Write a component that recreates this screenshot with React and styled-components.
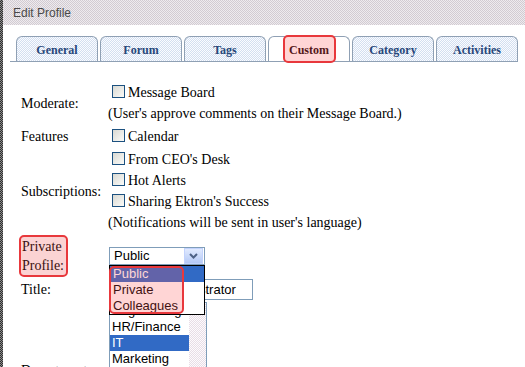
import React from 'react';
import styled, { createGlobalStyle } from 'styled-components';

const GlobalStyle = createGlobalStyle`
  html, body {
    margin: 0;
    padding: 0;
    background: #fff;
  }
  body {
    font-family: "Liberation Serif", "Times New Roman", serif;
    font-size: 14px;
    color: #000;
    overflow: hidden;
  }
`;

const dots = (a, b) => `repeating-conic-gradient(${a} 0 25%, ${b} 0 50%) 0 0 / 2px 2px`;

const Page = styled.div`
  display: flex;
  height: 367px;
`;

const EdgeStrip = styled.div`
  flex: none;
  width: 3px;
  background: ${dots('#2e2e2e', '#8c8c8c')};
`;

const Main = styled.div`
  flex: 1;
  min-width: 0;
`;

const Header = styled.div`
  height: 25px;
  display: flex;
  align-items: center;
  padding-left: 10px;
  background: ${dots('#d2cbd2', '#eeebee')};
  font-family: "Liberation Sans", Arial, sans-serif;
  font-size: 12px;
  color: #4a4a4a;
`;

const TabBar = styled.div`
  display: flex;
  gap: 2px;
  margin: 11px 7px 0 7px;
  padding-left: 6px;
  border-bottom: 1px solid #8fa0b4;
`;

const Tab = styled.div`
  position: relative;
  box-sizing: border-box;
  width: 82px;
  height: 25px;
  padding-top: 2px;
  display: flex;
  align-items: center;
  justify-content: center;
  border: 1px solid #8fa0b4;
  border-bottom: none;
  border-radius: 6px 6px 0 0;
  background: ${p => (p.$active ? '#fff' : dots('#d3dff0', '#fbfcff'))};
  font-size: 12px;
  font-weight: bold;
  color: ${p => (p.$active ? '#1a0808' : '#27477a')};
`;

const Callout = styled.span`
  position: absolute;
  left: ${p => p.$left}px;
  top: ${p => p.$top}px;
  width: ${p => p.$w}px;
  height: ${p => p.$h}px;
  box-sizing: border-box;
  border: 2px solid #e8383c;
  border-radius: 5px;
  background: rgba(255, 80, 80, 0.24);
  pointer-events: none;
  z-index: 3;
`;

const Form = styled.div`
  display: grid;
  grid-template-columns: 87px 1fr;
  row-gap: 2px;
  margin: 20px 0 0 18px;
  line-height: 21px;
`;

const Label = styled.div`
  align-self: center;
`;

const MarkedLabel = styled.div`
  align-self: center;
  justify-self: start;
  margin-left: -2px;
  padding: 0 2px 0 1px;
  line-height: 19px;
  border: 2px solid #e8383c;
  border-radius: 5px;
  background: #fbd3d3;
  color: #3a1010;
`;

const Values = styled.div`
  display: flex;
  flex-direction: column;
`;

const Line = styled.div`
  white-space: nowrap;
`;

const Check = styled.input.attrs({ type: 'checkbox' })`
  appearance: none;
  box-sizing: border-box;
  width: 13px;
  height: 13px;
  margin: 0 3px 0 4px;
  vertical-align: -1px;
  border: 1px solid #1c5180;
  background: linear-gradient(135deg, #d9d9d3, #fbfbf8);
`;

const sansField = `
  font-family: "Liberation Sans", Arial, sans-serif;
  font-size: 13px;
  color: #000;
`;

const SelectWrap = styled.div`
  position: relative;
  align-self: center;
  width: 96px;
  margin-left: 1px;
  ${sansField}
`;

const SelectBox = styled.div`
  box-sizing: border-box;
  height: 18px;
  display: flex;
  align-items: center;
  padding: 0 1px 0 4px;
  border: 1px solid #7f9db9;
  background: #fff;
  line-height: 16px;
`;

const DropButton = styled.span`
  margin-left: auto;
  width: 17px;
  height: 14px;
  display: flex;
  align-items: center;
  justify-content: center;
  border: 1px solid #c3d3fd;
  background: linear-gradient(#e1eafe, #b4c9f6);
`;

const DropList = styled.div`
  position: absolute;
  top: 100%;
  left: 0;
  width: 96px;
  box-sizing: border-box;
  border: 1px solid #000;
  background: #fff;
  z-index: 2;
`;

const Option = styled.div`
  height: 16px;
  line-height: 16px;
  padding-left: 3px;
  background: ${p => (p.$selected ? '#316ac5' : 'transparent')};
  color: ${p => (p.$selected ? '#fff' : '#000')};
`;

const TextInput = styled.input`
  align-self: center;
  box-sizing: border-box;
  width: 144px;
  height: 21px;
  margin: 0 0 0 1px;
  padding: 0 3px;
  border: 1px solid #7f9db9;
  ${sansField}
`;

const ListBox = styled.div`
  display: flex;
  box-sizing: border-box;
  width: 98px;
  height: 137px;
  margin-left: 1px;
  border: 1px solid #7f9db9;
  overflow: hidden;
  ${sansField}
`;

const ListItems = styled.div`
  flex: 1;
`;

const ListItem = styled(Option)`
  padding-left: 2px;
`;

const ScrollTrack = styled.div`
  width: 17px;
  background: ${dots('#e8dde6', '#fdfbfd')};
`;

const tabs = ['General', 'Forum', 'Tags', 'Custom', 'Category', 'Activities'];

const Chevron = () => (
  <svg width="9" height="6" viewBox="0 0 9 6">
    <path d="M1 1 L4.5 4.5 L8 1" fill="none" stroke="#4d6185" strokeWidth="2" />
  </svg>
);

const App = () => {
  return (
    <>
      <GlobalStyle />
      <Page>
        <EdgeStrip />
        <Main>
          <Header>Edit Profile</Header>
          <TabBar>
            {tabs.map(t => (
              <Tab key={t} $active={t === 'Custom'}>
                {t}
                {t === 'Custom' && <Callout $left={14} $top={-2} $w={53} $h={28} />}
              </Tab>
            ))}
          </TabBar>

          <Form>
            <Label>Moderate:</Label>
            <Values>
              <Line><Check />Message Board</Line>
              <Line>(User's approve comments on their Message Board.)</Line>
            </Values>

            <Label>Features</Label>
            <Values>
              <Line><Check />Calendar</Line>
            </Values>

            <Label>Subscriptions:</Label>
            <Values>
              <Line><Check />From CEO's Desk</Line>
              <Line><Check />Hot Alerts</Line>
              <Line><Check />Sharing Ektron's Success</Line>
              <Line>(Notifications will be sent in user's language)</Line>
            </Values>

            <MarkedLabel>Private<br />Profile:</MarkedLabel>
            <SelectWrap>
              <SelectBox>
                Public
                <DropButton><Chevron /></DropButton>
              </SelectBox>
              <DropList>
                <Option $selected>Public</Option>
                <Option>Private</Option>
                <Option>Colleagues</Option>
                <Callout $left={-1} $top={0} $w={75} $h={48} />
              </DropList>
            </SelectWrap>

            <Label>Title:</Label>
            <TextInput defaultValue="System Administrator" />

            <Label>Department:</Label>
            <ListBox>
              <ListItems>
                <ListItem>Engineering</ListItem>
                <ListItem>HR/Finance</ListItem>
                <ListItem $selected>IT</ListItem>
                <ListItem>Marketing</ListItem>
                <ListItem>Operations</ListItem>
                <ListItem>Sales</ListItem>
                <ListItem>Support</ListItem>
                <ListItem>Training</ListItem>
              </ListItems>
              <ScrollTrack />
            </ListBox>
          </Form>
        </Main>
      </Page>
    </>
  );
};

export default App;
